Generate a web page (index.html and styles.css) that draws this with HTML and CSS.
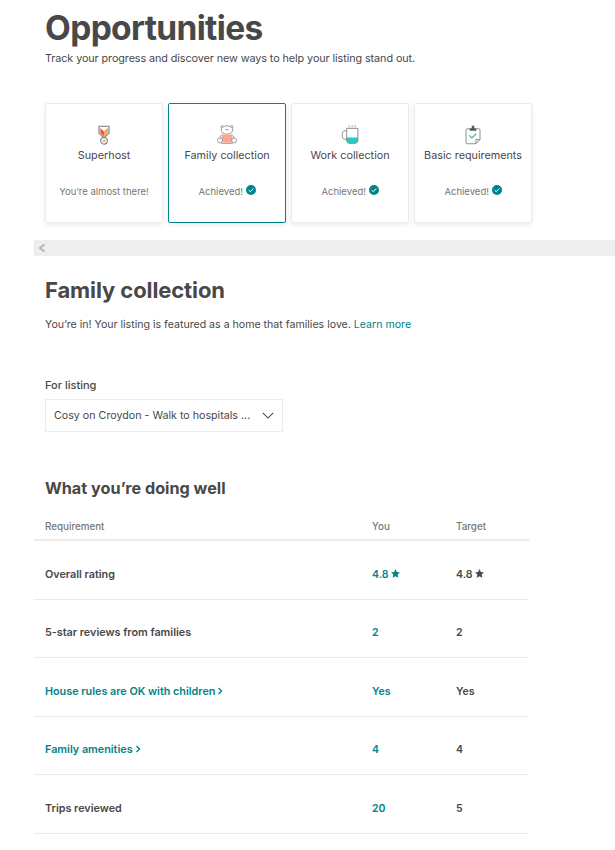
FILE: index.html
```html
<!DOCTYPE html>
<html lang="en">
<head>
    <meta charset="UTF-8">
    <meta name="viewport" content="width=device-width, initial-scale=1.0">
    <title>Opportunities</title>
    <link rel="stylesheet" href="styles.css">
</head>
<body>
    <div class="page">
        <div class="intro">
            <h1>Opportunities</h1>
            <p>Track your progress and discover new ways to help your listing stand out.</p>
        </div>

        <div class="cards">
            <div class="card">
                <svg class="card-icon" viewBox="0 0 24 24">
                    <path d="M6 1.500h12v8.500l-6 5-6-5z" fill="#fff" stroke="#77787a" stroke-width="1.300"/>
                    <path d="M7.500 4l4.500 3.500L16.500 4v5.500L12 13.500 7.500 9.500z" fill="#f0554f"/>
                    <path d="M12 7.500L16.500 4v5.500L12 13.500z" fill="#fbb040"/>
                    <circle cx="12" cy="19" r="4" fill="#fff" stroke="#77787a" stroke-width="1.300"/>
                    <circle cx="12" cy="19" r="1.800" fill="#fbb040"/>
                </svg>
                <div class="card-title">Superhost</div>
                <div class="card-status">You’re almost there!</div>
            </div>
            <div class="card active">
                <svg class="card-icon" viewBox="0 0 24 24">
                    <circle cx="6.500" cy="2.500" r="1.800" fill="#fff" stroke="#8a8a8a"/>
                    <circle cx="17.500" cy="2.500" r="1.800" fill="#fff" stroke="#8a8a8a"/>
                    <ellipse cx="12" cy="6" rx="7" ry="5" fill="#fff" stroke="#8a8a8a"/>
                    <path d="M10 5.500h4" stroke="#8a8a8a"/>
                    <path d="M6 11.500h12l1.500 8c-2 2.500-13 2.500-15 0z" fill="#ffa596"/>
                    <circle cx="3.500" cy="18.500" r="3" fill="#fff" stroke="#8a8a8a"/>
                    <circle cx="20.500" cy="18.500" r="3" fill="#fff" stroke="#8a8a8a"/>
                    <path d="M6 11.500c-1 1-2 2-2.500 4M18 11.500c1 1 2 2 2.500 4M5 22h14" fill="none" stroke="#8a8a8a"/>
                </svg>
                <div class="card-title">Family collection</div>
                <div class="card-status">Achieved!
                    <svg class="check" viewBox="0 0 10 10">
                        <circle cx="5" cy="5" r="5" fill="#008489"/>
                        <path d="M2.700 5.200l1.600 1.500 3-3.200" fill="none" stroke="#fff" stroke-width="1"/>
                    </svg>
                </div>
            </div>
            <div class="card">
                <svg class="card-icon" viewBox="0 0 24 24">
                    <path d="M11 0v3M14.500 0v3M18 0v3" stroke="#77787a" stroke-dasharray="1 .8"/>
                    <path d="M8 7H5C2 7 2 17 5 17h3" fill="none" stroke="#77787a"/>
                    <path d="M8 15h13.500v3c0 3-2 4-4 4H12c-2 0-4-1-4-4z" fill="#22cfc4"/>
                    <path d="M8 4h13.500v14c0 3-2 4-4 4H12c-2 0-4-1-4-4z" fill="none" stroke="#77787a"/>
                </svg>
                <div class="card-title">Work collection</div>
                <div class="card-status">Achieved!
                    <svg class="check" viewBox="0 0 10 10">
                        <circle cx="5" cy="5" r="5" fill="#008489"/>
                        <path d="M2.700 5.200l1.600 1.500 3-3.200" fill="none" stroke="#fff" stroke-width="1"/>
                    </svg>
                </div>
            </div>
            <div class="card">
                <svg class="card-icon" viewBox="0 0 24 24">
                    <path d="M8 4.500H5C4 4.500 3.600 5 3.600 6v15c0 1 .4 1.500 1.400 1.500h10.500l4.900-5V6c0-1-.4-1.500-1.400-1.500h-3" fill="#fff" stroke="#77787a"/>
                    <path d="M15.500 22.500v-5h4.900" fill="none" stroke="#77787a"/>
                    <path d="M8 7V4h2.500V1h3v3H16v3z" fill="#555759"/>
                    <path d="M7.500 12.500l3 3 5.500-5" fill="none" stroke="#2bb8b0" stroke-width="1.300"/>
                </svg>
                <div class="card-title">Basic requirements</div>
                <div class="card-status">Achieved!
                    <svg class="check" viewBox="0 0 10 10">
                        <circle cx="5" cy="5" r="5" fill="#008489"/>
                        <path d="M2.700 5.200l1.600 1.500 3-3.200" fill="none" stroke="#fff" stroke-width="1"/>
                    </svg>
                </div>
            </div>
        </div>

        <div class="scrollbar">
            <svg class="scroll-arrow" viewBox="0 0 8 8">
                <path d="M6.500 .5L2 4l4.500 3.500" fill="none" stroke="#b4b4b4" stroke-width="2"/>
            </svg>
        </div>

        <div class="detail">
            <h2>Family collection</h2>
            <p class="detail-text">You’re in! Your listing is featured as a home that families love. <a href="#">Learn more</a></p>

            <label class="field-label">For listing</label>
            <div class="select">
                <span>Cosy on Croydon - Walk to hospitals ...</span>
                <svg class="select-arrow" viewBox="0 0 14 8">
                    <path d="M1 1l6 6 6-6" fill="none" stroke="#484848" stroke-width="1.200"/>
                </svg>
            </div>

            <h3>What you’re doing well</h3>
        </div>

        <div class="table">
            <div class="row head">
                <div>Requirement</div>
                <div>You</div>
                <div>Target</div>
            </div>
            <div class="row">
                <div>Overall rating</div>
                <div class="value you">4.8 <svg class="star" viewBox="0 0 20 20"><path d="M10 0l3 6.700 7 .8-5.200 4.800 1.500 7.200L10 16.200 3.700 19.500l1.500-7.200L0 7.500l7-.8z" fill="#008489"/></svg></div>
                <div class="value">4.8 <svg class="star" viewBox="0 0 20 20"><path d="M10 0l3 6.700 7 .8-5.200 4.800 1.500 7.200L10 16.200 3.700 19.500l1.500-7.200L0 7.500l7-.8z" fill="#484848"/></svg></div>
            </div>
            <div class="row">
                <div>5-star reviews from families</div>
                <div class="value you">2</div>
                <div class="value">2</div>
            </div>
            <div class="row">
                <div class="you">House rules are OK with children<svg class="more" viewBox="0 0 6 8"><path d="M1.500 1l3 3-3 3" fill="none" stroke="#008489" stroke-width="1.400"/></svg></div>
                <div class="value you">Yes</div>
                <div class="value">Yes</div>
            </div>
            <div class="row">
                <div class="you">Family amenities<svg class="more" viewBox="0 0 6 8"><path d="M1.500 1l3 3-3 3" fill="none" stroke="#008489" stroke-width="1.400"/></svg></div>
                <div class="value you">4</div>
                <div class="value">4</div>
            </div>
            <div class="row">
                <div>Trips reviewed</div>
                <div class="value you">20</div>
                <div class="value">5</div>
            </div>
        </div>
    </div>
</body>
</html>
```

FILE: styles.css
```css
body {
    font-family: 'Inter', 'Liberation Sans', sans-serif;
    background-color: white;
    margin: 0;
    padding: 0;
    color: #484848;
}
.page {
    padding-left: 34px;
    height: 850px;
    overflow: hidden;
}
.intro {
    padding-left: 11px;
}
h1 {
    margin: 0;
    padding-top: 8px;
    font-size: 33.5px;
    line-height: 40px;
    font-weight: 700;
    letter-spacing: -0.65px;
}
.intro p {
    margin: 3px 0 0;
    font-size: 10.8px;
    line-height: 16px;
    letter-spacing: -0.08px;
}
.cards {
    display: flex;
    gap: 4.8px;
    margin-top: 36px;
    padding-left: 11px;
}
.card {
    width: 118.2px;
    height: 120px;
    box-sizing: border-box;
    padding-top: 21px;
    text-align: center;
    background-color: white;
    border: 1px solid #ececec;
    border-radius: 2px;
    box-shadow: 0 2px 5px rgba(0, 0, 0, 0.08);
}
.card.active {
    border-color: #008489;
}
.card-icon {
    display: block;
    width: 20px;
    height: 20px;
    margin: 0 auto;
}
.card-title {
    margin-top: 3px;
    font-size: 10.8px;
    line-height: 16px;
}
.card-status {
    margin-top: 21px;
    font-size: 9.5px;
    line-height: 14px;
    color: #767676;
}
.check {
    width: 10px;
    height: 10px;
}
.scrollbar {
    display: flex;
    align-items: center;
    height: 16px;
    margin-top: 17px;
    background-color: #eeeeee;
}
.scroll-arrow {
    width: 8px;
    height: 8px;
    margin-left: 4px;
}
.detail {
    padding-left: 11px;
}
h2 {
    margin: 20px 0 0;
    font-size: 22px;
    line-height: 28px;
    font-weight: 700;
    letter-spacing: -0.1px;
}
.detail-text {
    margin: 13px 0 0;
    font-size: 10.6px;
    line-height: 16px;
}
.detail-text a {
    color: #008489;
    text-decoration: none;
}
.field-label {
    display: block;
    margin-top: 44px;
    font-size: 11px;
    line-height: 16px;
    font-weight: 500;
}
.select {
    display: flex;
    align-items: center;
    justify-content: space-between;
    width: 238px;
    height: 33px;
    box-sizing: border-box;
    margin-top: 6px;
    padding: 0 8px;
    font-size: 10.7px;
    border: 1px solid #ececec;
}
.select-arrow {
    width: 12px;
    height: 7px;
}
h3 {
    margin: 45px 0 0;
    font-size: 16.2px;
    line-height: 22px;
    font-weight: 700;
}
.table {
    width: 495px;
    margin-top: 11px;
}
.row {
    display: grid;
    grid-template-columns: 327px 84px 1fr;
    align-items: center;
    height: 58.5px;
    box-sizing: border-box;
    padding-left: 11px;
    padding-top: 9px;
    font-size: 10.8px;
    font-weight: 600;
    border-bottom: 1px solid #ebebeb;
}
.row.head {
    height: 31px;
    padding-top: 4px;
    font-size: 9.8px;
    font-weight: 500;
    color: #767676;
    border-bottom-width: 2px;
}
.value {
    font-size: 10.5px;
    font-weight: 600;
}
.you {
    color: #008489;
}
.star {
    width: 9px;
    height: 9px;
}
.more {
    width: 6px;
    height: 8px;
    margin-left: 2px;
}
```
